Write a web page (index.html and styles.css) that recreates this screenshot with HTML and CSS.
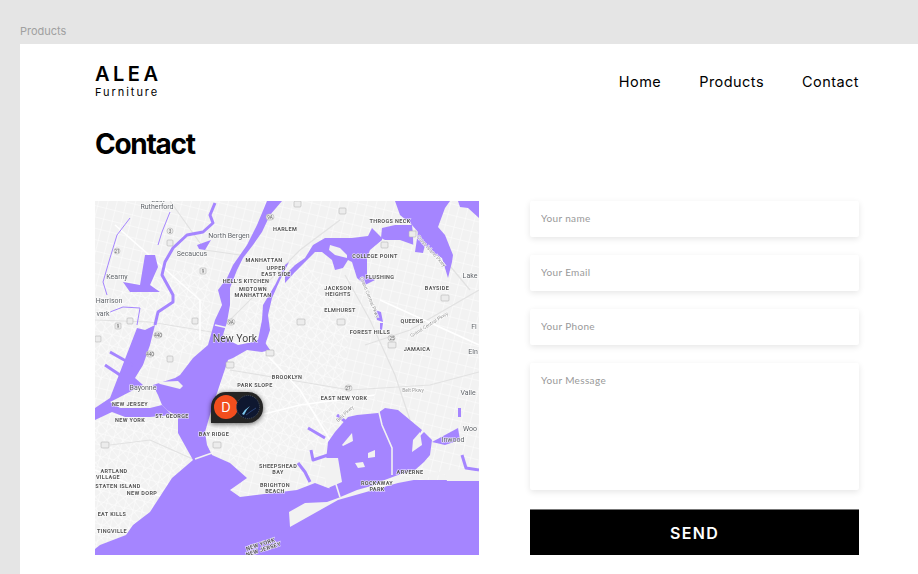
FILE: index.html
```html
<!DOCTYPE html>
<html lang="en">
<head>
  <meta charset="UTF-8">
  <title>Contact</title>
  <link rel="stylesheet" href="styles.css">
</head>
<body>

  <div class="frame-label">Products</div>

  <div class="frame">
    <header class="site-header">
      <div class="logo">
        <div class="logo-name">ALEA</div>
        <div class="logo-sub">Furniture</div>
      </div>
      <nav class="nav">
        <a href="#">Home</a>
        <a href="#">Products</a>
        <a href="#">Contact</a>
      </nav>
    </header>

    <h1 class="page-title">Contact</h1>

    <div class="contact-row">
      <div class="map">
        <svg class="map-svg" viewBox="95 201 384 354" width="384" height="354">
          <defs>
            <pattern id="grid-a" width="7" height="9" patternUnits="userSpaceOnUse" patternTransform="rotate(-38)">
              <path d="M0 0H7M0 0V9" class="grid-line"/>
            </pattern>
            <pattern id="grid-b" width="9" height="11" patternUnits="userSpaceOnUse" patternTransform="rotate(14)">
              <path d="M0 0H9M0 0V11" class="grid-line"/>
            </pattern>
          </defs>

          <rect x="95" y="201" width="384" height="354" class="land"/>
          <rect x="95" y="201" width="384" height="354" fill="url(#grid-b)"/>
          <polygon points="215,345 300,250 350,320 340,440 230,470" fill="url(#grid-a)"/>
          <polygon points="95,420 170,420 190,460 130,530 95,545" fill="url(#grid-a)"/>
          <polygon points="95,300 210,260 210,340 130,380 95,380" fill="url(#grid-a)"/>

          <!-- main roads -->
          <polyline class="road-major" points="95,320 150,322 230,335"/>
          <polyline class="road-major" points="110,445 150,440 195,460"/>
          <polyline class="road-major" points="170,201 205,250 240,255"/>
          <polyline class="road-major" points="210,340 300,250 340,220"/>
          <polyline class="road-major" points="345,275 370,320 395,375 410,420"/>
          <polyline class="road-major" points="365,345 410,330 479,290"/>
          <polyline class="road-major" points="230,370 350,390 430,385 479,372"/>
          <polyline class="road-major" points="415,230 445,260 470,290"/>
          <polyline class="road-white" points="262,350 300,390 330,440"/>
          <polyline class="road-white" points="240,420 300,405 375,395"/>
          <polyline class="road-white" points="380,300 479,345"/>
          <polyline class="road-white" points="95,470 170,500"/>
          <polyline class="road-white" points="115,225 200,300 200,340"/>

          <!-- water -->
          <polygon class="water" points="95,555 479,555 479,480 400,480 340,490 328,488 315,483 297,490 240,497 230,490 240,483 247,478 230,463 212,455 207,445 205,432 212,408 223,375 228,360 233,358 247,350 262,352 270,350 262,338 253,342 238,345 232,342 223,335 227,322 230,305 230,288 237,270 243,258 253,245 262,232 270,215 282,201 267,201 257,225 247,245 233,265 227,278 218,290 222,305 215,320 210,338 208,345 193,358 180,375 175,378 153,385 158,395 162,405 167,410 178,417 178,433 193,460 172,478 150,512 133,525 126,535 100,545 95,549"/>
          <polygon class="water" points="137,328 145,330 155,325 150,345 143,365 135,378 143,385 118,398 110,402 120,408 150,408 162,405 172,415 150,417 125,417 112,412 95,420 95,408 110,398"/>
          <polygon class="water" points="395,201 400,215 412,225 418,232 415,252 423,253 425,245 432,253 442,258 448,278 452,262 453,255 445,235 438,227 445,208 450,201"/>
          <polygon class="water" points="382,228 395,225 412,225 414,245 400,240 385,240 381,238"/>
          <polygon class="water" points="458,201 479,201 479,218 468,208 460,207"/>
          <polygon class="water" points="382,238 372,228 368,236 352,238 325,238 313,245 305,258 295,265 285,275 285,283 295,272 305,262 315,252 322,252 332,260 335,270 343,268 348,260 352,262 357,278 365,285 375,280 367,275 367,258 370,250 382,240"/>
          <polygon class="water" points="289,262 280,280 272,298 268,315 270,330 265,345 270,350 262,348 258,340 262,320 263,305 275,285 285,265"/>
          <polygon class="water" points="123,282 140,285 145,255 155,255 158,267 150,285 160,292 145,292 130,292"/>
          <polygon class="water" points="197,245 211,240 205,250 199,249"/>
          <polygon class="water" points="375,310 381,312 383,322 377,320"/>
          <polygon class="water" points="380,323 383,323 382,330 380,330"/>
          <polygon class="water" points="328,442 335,432 348,417 357,415 378,413 385,408 398,410 422,430 416,440 424,432 432,440 430,455 424,462 415,470 398,475 358,490 340,498 330,490 325,470"/>
          <polygon class="water" points="432,442 445,435 458,428 460,440 445,445"/>
          <polygon class="water" points="458,408 461,408 461,417 458,417"/>

          <!-- thin creeks -->
          <polyline class="creek" points="215,203 210,215 213,223 203,232 187,235 173,248 165,262 162,275 173,295 173,302 158,312 155,325"/>
          <polyline class="creek-thin" points="130,218 117,235 110,258 103,282 107,295"/>
          <polyline class="creek-thin" points="110,312 123,307 140,308 137,325"/>
          <polyline class="creek-thin" points="170,212 162,232 158,245"/>
          <polyline class="creek" points="110,352 133,365"/>
          <polyline class="creek" points="105,365 120,375"/>
          <polyline class="creek" points="308,428 325,438"/>
          <polyline class="creek" points="337,415 350,425"/>
          <polyline class="creek" points="311,450 313,460 328,455"/>
          <polyline class="creek" points="298,463 305,472 310,482"/>
          <polyline class="creek" points="462,455 466,468 479,470"/>

          <!-- land on top of water -->
          <polygon class="land" points="289,512 305,503 327,502 338,498 357,490 392,480 438,472 455,469 479,472 479,481 447,481 445,474 398,483 338,500 290,527"/>
          <polygon class="land" points="325,458 338,458 342,482 328,488 325,478"/>
          <polygon class="land" points="330,245 340,248 347,255 347,258 335,255 329,250"/>
          <polygon class="land" points="342,445 352,433 353,441 343,446"/>
          <polygon class="land" points="368,453 375,450 375,457 368,458"/>
          <polygon class="land" points="355,463 363,462 365,467 358,468"/>
          <polygon class="land" points="413,440 420,432 422,445 412,452"/>
          <polygon class="land" points="157,382 178,381 183,386 180,389 160,384"/>
          <polyline class="causeway" points="375,395 382,425 392,448 392,475"/>
          <polyline class="causeway" points="414,232 414,252"/>
          <polyline class="causeway" points="195,459 212,453"/>
          <polyline class="causeway" points="334,478 340,497"/>
          <polyline class="causeway" points="215,325 228,328"/>

          <!-- shields -->
          <g class="shields">
            <rect x="266" y="214" width="8" height="6" rx="3"/><rect x="167" y="228" width="6" height="6" rx="3"/>
            <rect x="167" y="240" width="6" height="6" rx="1"/><rect x="114" y="248" width="6" height="6" rx="3"/>
            <rect x="200" y="268" width="6" height="6" rx="1"/><rect x="227" y="319" width="8" height="6" rx="3"/>
            <rect x="192" y="318" width="6" height="6" rx="1"/><rect x="115" y="323" width="6" height="6" rx="1"/>
            <rect x="127" y="318" width="6" height="6" rx="1"/><rect x="95" y="336" width="6" height="6" rx="1"/>
            <rect x="154" y="332" width="8" height="6" rx="3"/><rect x="146" y="351" width="8" height="6" rx="3"/>
            <rect x="167" y="356" width="6" height="6" rx="1"/><rect x="226" y="362" width="8" height="6" rx="1"/>
            <rect x="266" y="350" width="8" height="6" rx="1"/><rect x="339" y="208" width="7" height="6" rx="1"/>
            <rect x="294" y="201" width="7" height="6" rx="1"/><rect x="381" y="242" width="7" height="6" rx="1"/>
            <rect x="409" y="231" width="7" height="6" rx="1"/><rect x="441" y="295" width="8" height="6" rx="1"/>
            <rect x="297" y="319" width="8" height="6" rx="1"/><rect x="337" y="319" width="8" height="6" rx="1"/>
            <rect x="388" y="335" width="7" height="6" rx="3"/><rect x="388" y="342" width="8" height="6" rx="1"/>
            <rect x="213" y="442" width="8" height="6" rx="1"/><rect x="101" y="442" width="8" height="6" rx="1"/>
            <rect x="345" y="385" width="7" height="6" rx="3"/>
          </g>
          <g class="shield-nums">
            <text x="270" y="219">9A</text><text x="170" y="233">3</text><text x="117" y="253">21</text>
            <text x="203" y="273">9</text><text x="231" y="324">9A</text><text x="158" y="337">440</text>
            <text x="150" y="356">440</text><text x="392" y="340">25</text><text x="348" y="390">27</text>
            <text x="118" y="328">9</text>
          </g>

          <!-- city names -->
          <g class="place">
            <text x="158" y="202">East</text>
            <text x="157" y="209">Rutherford</text>
            <text x="229" y="238">North Bergen</text>
            <text x="192" y="256">Secaucus</text>
            <text x="117" y="279">Kearny</text>
            <text x="109" y="303">Harrison</text>
            <text x="103" y="316">vark</text>
            <text x="143" y="390">Bayonne</text>
            <text x="470" y="278">Lake</text>
            <text x="474" y="329">Fl</text>
            <text x="473" y="354">Eln</text>
            <text x="468" y="395">Valle</text>
            <text x="470" y="431">Woo</text>
            <text x="453" y="442">Inwood</text>
          </g>
          <text x="235" y="342" class="place-big">New York</text>

          <!-- neighbourhoods -->
          <g class="hood">
            <text x="285" y="231">HARLEM</text>
            <text x="264" y="262">MANHATTAN</text>
            <text x="276" y="270">UPPER</text>
            <text x="276" y="276">EAST SIDE</text>
            <text x="246" y="283">HELL'S KITCHEN</text>
            <text x="253" y="291">MIDTOWN</text>
            <text x="253" y="297">MANHATTAN</text>
            <text x="390" y="223">THROGS NECK</text>
            <text x="375" y="258">COLLEGE POINT</text>
            <text x="380" y="279">FLUSHING</text>
            <text x="338" y="290">JACKSON</text>
            <text x="338" y="296">HEIGHTS</text>
            <text x="340" y="312">ELMHURST</text>
            <text x="437" y="290">BAYSIDE</text>
            <text x="412" y="323">QUEENS</text>
            <text x="370" y="334">FOREST HILLS</text>
            <text x="417" y="351">JAMAICA</text>
            <text x="130" y="406">NEW JERSEY</text>
            <text x="130" y="422">NEW YORK</text>
            <text x="172" y="418">ST. GEORGE</text>
            <text x="255" y="387">PARK SLOPE</text>
            <text x="287" y="379">BROOKLYN</text>
            <text x="214" y="436">BAY RIDGE</text>
            <text x="344" y="400">EAST NEW YORK</text>
            <text x="278" y="468">SHEEPSHEAD</text>
            <text x="278" y="474">BAY</text>
            <text x="275" y="487">BRIGHTON</text>
            <text x="275" y="493">BEACH</text>
            <text x="377" y="485">ROCKAWAY</text>
            <text x="377" y="491">PARK</text>
            <text x="410" y="474">ARVERNE</text>
            <text x="114" y="473">ARTLAND</text>
            <text x="108" y="479">VILLAGE</text>
            <text x="118" y="488">STATEN ISLAND</text>
            <text x="142" y="495">NEW DORP</text>
            <text x="112" y="516">EAT KILLS</text>
            <text x="112" y="533">TINGVILLE</text>
            <text x="261" y="546" transform="rotate(-18 261 546)">NEW YORK</text>
            <text x="264" y="551" transform="rotate(-18 264 551)">NEW JERSEY</text>
          </g>

          <!-- road names -->
          <g class="roadname">
            <text x="368" y="298" transform="rotate(68 368 298)">Grand Central Pkwy</text>
            <text x="430" y="326" transform="rotate(-32 430 326)">Grand Central Pkwy</text>
            <text x="430" y="252" transform="rotate(48 430 252)">Cross Island Pkwy</text>
            <text x="413" y="392">Belt Pkwy</text>
            <text x="346" y="415" transform="rotate(-42 346 415)">Belt Pkwy</text>
          </g>
        </svg>

        <div class="marker">
          <span class="marker-d">D</span>
          <svg class="marker-pic" viewBox="0 0 24 24" width="24" height="24">
            <circle cx="12" cy="12" r="11.5" fill="#0e1730" stroke="#47505f" stroke-dasharray="1 1"/>
            <path d="M6 19 Q9 14 14 11 Q10 15 8 20Z" fill="#7cc8ee"/>
            <path d="M10 20 Q15 16 20 13" stroke="#2a4478" fill="none"/>
          </svg>
        </div>
      </div>

      <form class="contact-form">
        <input class="field" type="text" placeholder="Your name">
        <input class="field" type="text" placeholder="Your Email">
        <input class="field" type="text" placeholder="Your Phone">
        <textarea class="field field-message" placeholder="Your Message"></textarea>
        <button class="send" type="button">SEND</button>
      </form>
    </div>
  </div>

</body>
</html>
```

FILE: styles.css
```css
html, body {
  height: 100%;
}
body {
  margin: 0;
  background-color: #e5e5e5;
  font-family: Inter, "Liberation Sans", sans-serif;
  overflow: hidden;
}
.frame-label {
  height: 44px;
  box-sizing: border-box;
  padding: 25px 0 0 20px;
  font-size: 11px;
  line-height: 13px;
  color: #a0a0a0;
}
.frame {
  margin-left: 20px;
  height: 530px;
  padding: 21px 59px 0 75px;
  box-sizing: border-box;
  background-color: #fff;
}
.site-header {
  display: flex;
  justify-content: space-between;
  align-items: center;
}
.logo-name {
  font-size: 20px;
  line-height: 19px;
  font-weight: 600;
  letter-spacing: 3.5px;
  color: #000;
}
.logo-sub {
  margin-top: 2px;
  font-size: 11px;
  line-height: 13px;
  letter-spacing: 1.95px;
  color: #000;
}
.nav {
  display: flex;
  gap: 38px;
}
.nav a {
  font-size: 14.5px;
  line-height: 18px;
  letter-spacing: 0.45px;
  color: #000;
  text-decoration: none;
}
.page-title {
  margin: 28px 0 40px;
  font-size: 28px;
  line-height: 34px;
  font-weight: 700;
  letter-spacing: -1.3px;
  color: #000;
}
.contact-row {
  display: flex;
  justify-content: space-between;
}
.map {
  position: relative;
  width: 384px;
  height: 354px;
  overflow: hidden;
}
.map-svg {
  display: block;
  filter: blur(0.35px);
}
.land {
  fill: #f2f2f2;
}
.grid-line {
  stroke: #fff;
  stroke-width: 0.9;
  fill: none;
}
.road-major {
  stroke: #e2e2e2;
  stroke-width: 1.2;
  fill: none;
}
.road-white {
  stroke: #fff;
  stroke-width: 1.6;
  fill: none;
}
.water {
  fill: #a585ff;
}
.creek, .creek-thin {
  stroke: #a585ff;
  stroke-linejoin: round;
  fill: none;
}
.creek {
  stroke-width: 3;
}
.creek-thin {
  stroke-width: 1;
}
.causeway {
  stroke: #f2f2f2;
  stroke-width: 1.6;
  fill: none;
}
.shields rect {
  fill: #ececec;
  stroke: #b5b5b5;
  stroke-width: 0.6;
}
.shield-nums text {
  font-family: Roboto, sans-serif;
  font-size: 4.5px;
  fill: #666;
  text-anchor: middle;
}
.place text, .place-big, .hood text, .roadname text {
  font-family: Roboto, sans-serif;
  text-anchor: middle;
  paint-order: stroke;
  stroke: #fff;
  stroke-width: 1.2px;
  stroke-opacity: 0.8;
}
.place text {
  font-size: 7px;
  fill: #5f6368;
}
.place-big {
  font-size: 10.5px;
  fill: #444;
}
.hood text {
  font-size: 5.5px;
  font-weight: 700;
  letter-spacing: 0.35px;
  fill: #555;
}
.roadname text {
  font-size: 5px;
  fill: #999;
}
.marker {
  position: absolute;
  left: 116px;
  top: 191px;
  width: 52px;
  height: 31px;
  box-sizing: border-box;
  padding: 3px 3px 0 3px;
  display: flex;
  background-color: #242424;
  border-radius: 15px 15px 15px 0;
  box-shadow: 0 1px 5px rgba(0, 0, 0, 0.6);
}
.marker-d {
  flex: none;
  width: 24px;
  height: 24px;
  border-radius: 50%;
  background-color: #f24e1e;
  color: #fff;
  font-size: 13px;
  line-height: 24px;
  text-align: center;
}
.marker-pic {
  flex: none;
  margin-left: -2px;
}
.contact-form {
  width: 329px;
  display: flex;
  flex-direction: column;
  gap: 18px;
}
.field {
  display: block;
  width: 100%;
  height: 36px;
  box-sizing: border-box;
  padding: 0 11px 2px;
  border: 0;
  border-radius: 2px;
  outline: 0;
  background-color: #fff;
  box-shadow: 0 2px 6px rgba(0, 0, 0, 0.1);
  font-family: Lato, sans-serif;
  font-size: 10px;
  letter-spacing: 0.35px;
}
.field::placeholder {
  color: #999;
  opacity: 1;
}
.field-message {
  height: 127px;
  padding-top: 11px;
  resize: none;
}
.send {
  display: block;
  height: 46px;
  margin-top: 1px;
  border: 0;
  border-top: 1px solid #777;
  background-color: #000;
  color: #fff;
  font-family: Inter, sans-serif;
  font-size: 16px;
  font-weight: 600;
  letter-spacing: 1.3px;
}
```
